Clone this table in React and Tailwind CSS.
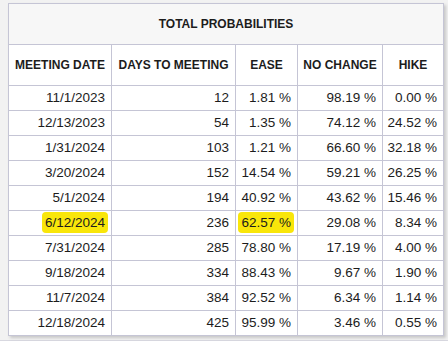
const rows = [
  ["11/1/2023", "12", "1.81 %", "98.19 %", "0.00 %"],
  ["12/13/2023", "54", "1.35 %", "74.12 %", "24.52 %"],
  ["1/31/2024", "103", "1.21 %", "66.60 %", "32.18 %"],
  ["3/20/2024", "152", "14.54 %", "59.21 %", "26.25 %"],
  ["5/1/2024", "194", "40.92 %", "43.62 %", "15.46 %"],
  ["6/12/2024", "236", "62.57 %", "29.08 %", "8.34 %", true],
  ["7/31/2024", "285", "78.80 %", "17.19 %", "4.00 %"],
  ["9/18/2024", "334", "88.43 %", "9.67 %", "1.90 %"],
  ["11/7/2024", "384", "92.52 %", "6.34 %", "1.14 %"],
  ["12/18/2024", "425", "95.99 %", "3.46 %", "0.55 %"],
];

const headers = ["MEETING DATE", "DAYS TO MEETING", "EASE", "NO CHANGE", "HIKE"];

// yellow highlighter marks over the june meeting
function Mark({ on, children }) {
  if (!on) return children;
  return (
    <span className="bg-[#f9e60a] rounded-[4px] px-[3px] py-[3px] -mx-[3px]">{children}</span>
  );
}

export default function App() {
  const td = "border border-[#c5c5d5] text-right pr-[6px] h-[25px] p-0";
  return (
    <div className="h-[341px] w-[448px] bg-[#f2f2f2] pt-[3px] pl-[8px] font-['Liberation_Sans',Arial,sans-serif] text-[#1c1c1c] border-b border-[#d8d8e0]">
      <table className="w-[435px] table-fixed border-collapse bg-white shadow-[2px_2px_3px_rgba(0,0,0,0.18)]">
        <colgroup>
          <col className="w-[103px]" />
          <col className="w-[124px]" />
          <col className="w-[62px]" />
          <col className="w-[85px]" />
          <col className="w-[61px]" />
        </colgroup>
        <thead>
          <tr>
            <th colSpan={5} className="border border-[#c5c5d5] bg-[#f7f7f7] h-[41px] p-0 text-[12px] font-bold text-center">
              TOTAL PROBABILITIES
            </th>
          </tr>
          <tr>
            {headers.map((h) => (
              <th key={h} className="border border-[#c5c5d5] h-[41px] p-0 text-[12px] font-bold text-center whitespace-nowrap">
                {h}
              </th>
            ))}
          </tr>
        </thead>
        <tbody className="text-[13.5px]">
          {rows.map((r) => (
            <tr key={r[0]}>
              <td className={td}><Mark on={r[5]}>{r[0]}</Mark></td>
              <td className={td}>{r[1]}</td>
              <td className={td}><Mark on={r[5]}>{r[2]}</Mark></td>
              <td className={td}>{r[3]}</td>
              <td className={td}>{r[4]}</td>
            </tr>
          ))}
        </tbody>
      </table>
    </div>
  );
}
